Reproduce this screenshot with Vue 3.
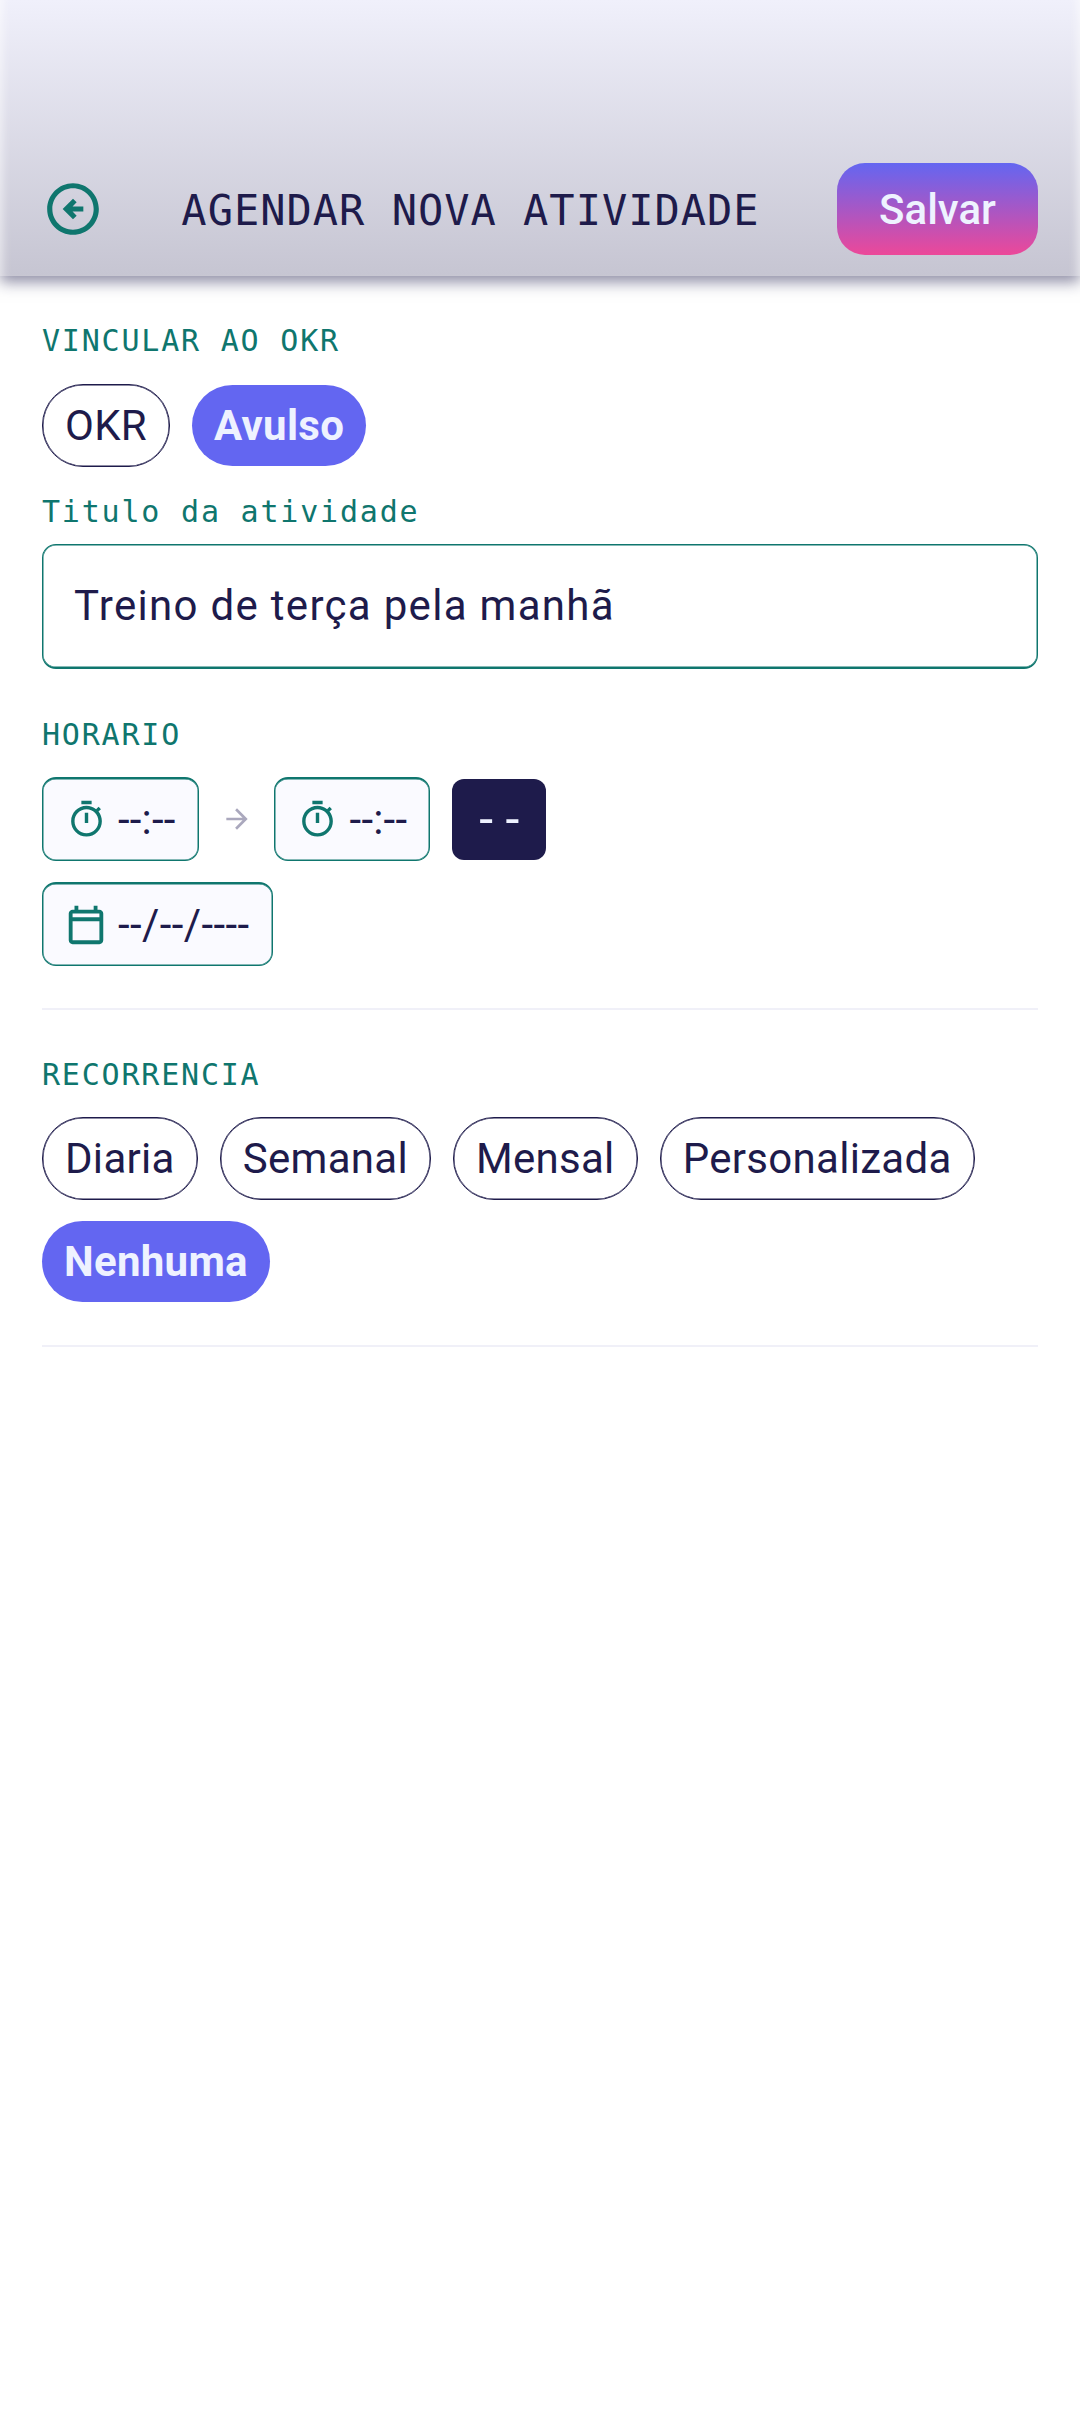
<template>
  <div class="screen">
    <header class="topbar">
      <button class="back" aria-label="Voltar">
        <svg viewBox="0 0 24 24" class="back-icon">
          <path d="M2 12c0 5.52 4.48 10 10 10s10-4.48 10-10S17.52 2 12 2 2 6.48 2 12zm18 0c0 4.42-3.58 8-8 8s-8-3.58-8-8 3.58-8 8-8 8 3.58 8 8zM8 12l4-4 1.41 1.41L11.83 11H16v2h-4.17l1.59 1.59L12 16l-4-4z" />
        </svg>
      </button>
      <h1 class="title">AGENDAR NOVA ATIVIDADE</h1>
      <button class="save">Salvar</button>
    </header>

    <main class="content">
      <div class="label first">VINCULAR AO OKR</div>
      <div class="chips">
        <span
          v-for="opt in linkOptions"
          :key="opt"
          class="chip"
          :class="{ selected: opt === link }"
        >{{ opt }}</span>
      </div>

      <div class="label title-label">Titulo da atividade</div>
      <input class="text-input" type="text" :value="activityTitle" />

      <div class="label section-label">HORARIO</div>
      <div class="time-row">
        <div class="field">
          <span class="field-icon">
            <svg viewBox="0 0 24 24" class="timer"><path :d="timerPath" /></svg>
          </span>
          <span>--:--</span>
        </div>
        <svg viewBox="0 0 24 24" class="arrow">
          <path d="M12 4l-1.41 1.41L16.17 11H4v2h12.17l-5.58 5.59L12 20l8-8z" />
        </svg>
        <div class="field">
          <span class="field-icon">
            <svg viewBox="0 0 24 24" class="timer"><path :d="timerPath" /></svg>
          </span>
          <span>--:--</span>
        </div>
        <div class="duration">- -</div>
      </div>
      <div class="date-row">
        <div class="field">
          <span class="field-icon">
            <svg viewBox="0 0 24 24" class="calendar">
              <path d="M19 4h-1V2h-2v2H8V2H6v2H5c-1.1 0-2 .9-2 2v14c0 1.1.9 2 2 2h14c1.1 0 2-.9 2-2V6c0-1.1-.9-2-2-2zm0 16H5V10h14v10zm0-12H5V6h14v2z" />
            </svg>
          </span>
          <span>--/--/----</span>
        </div>
      </div>

      <div class="divider"></div>

      <div class="label section-label recur-label">RECORRENCIA</div>
      <div class="chips wrap">
        <span
          v-for="opt in recurrenceOptions"
          :key="opt"
          class="chip"
          :class="{ selected: opt === recurrence }"
        >{{ opt }}</span>
      </div>

      <div class="divider last"></div>
    </main>
  </div>
</template>

<script setup>
import { ref } from 'vue';

const linkOptions = ['OKR', 'Avulso'];
const recurrenceOptions = ['Diaria', 'Semanal', 'Mensal', 'Personalizada', 'Nenhuma'];

const link = ref('Avulso');
const recurrence = ref('Nenhuma');
const activityTitle = ref('Treino de terça pela manhã');

const timerPath =
  'M15 1H9v2h6V1zm-4 13h2V8h-2v6zm8.03-6.61l1.42-1.42c-.43-.51-.9-.99-1.41-1.41l-1.42 1.42C16.07 4.74 14.12 4 12 4c-4.97 0-9 4.03-9 9s4.02 9 9 9 9-4.03 9-9c0-2.12-.74-4.07-1.97-5.61zM12 20c-3.87 0-7-3.13-7-7s3.13-7 7-7 7 3.13 7 7-3.13 7-7 7z';
</script>

<style>
html,
body {
  background: #fff;
}
</style>

<style scoped>
.screen {
  min-height: 2424px;
  background: #fff;
  font-family: Roboto, sans-serif;
  color: #1e1b4b;
}

.topbar {
  position: relative;
  box-sizing: border-box;
  height: 276px;
  padding: 0 42px 21px;
  display: flex;
  align-items: flex-end;
  justify-content: space-between;
  background: linear-gradient(180deg, #f0f0fb 0%, #c6c5d2 100%);
  box-shadow:
    0 6px 14px rgba(30, 27, 75, 0.5),
    inset 10px 0 9px -7px rgba(255, 255, 255, 0.55),
    inset -10px 0 9px -7px rgba(255, 255, 255, 0.55);
}

.back {
  width: 62px;
  height: 62px;
  margin-bottom: 15px;
  padding: 0;
  border: 0;
  background: none;
}

.back-icon {
  display: block;
  width: 62px;
  height: 62px;
  fill: #0f766e;
}

.title {
  margin: 0 0 19px;
  font-family: "DejaVu Sans Mono", monospace;
  font-size: 42px;
  letter-spacing: 1px;
  line-height: 50px;
  font-weight: 400;
  color: #1e1b4b;
}

.save {
  width: 201px;
  height: 92px;
  padding: 0;
  border: 0;
  border-radius: 28px;
  background: linear-gradient(180deg, #6366f1 0%, #ec4899 100%);
  font-family: Roboto, sans-serif;
  font-size: 42px;
  font-weight: 500;
  color: #eef2ff;
}

.content {
  padding: 46px 42px 0;
}

.label {
  font-family: "DejaVu Sans Mono", monospace;
  font-size: 30px;
  letter-spacing: 1.8px;
  line-height: 38px;
  color: #0f766e;
}

.title-label {
  margin-top: 26px;
}

.section-label {
  margin-top: 47px;
}

.recur-label {
  margin-top: 46px;
}

.chips {
  margin-top: 24px;
  display: flex;
  flex-wrap: wrap;
  align-items: center;
  gap: 21px 22px;
}

.wrap {
  margin-top: 23px;
}

.chip {
  box-sizing: border-box;
  height: 83px;
  padding: 0 22px;
  display: flex;
  align-items: center;
  border: 1px solid #1e1b4b;
  border-radius: 41px;
  box-shadow: inset 0 0 0 0.5px #1e1b4b;
  font-size: 42px;
  letter-spacing: 0.3px;
  color: #1e1b4b;
}

.chip.selected {
  height: 81px;
  border: 0;
  box-shadow: none;
  background: #6366f1;
  font-weight: 700;
  color: #eef2ff;
}

.text-input {
  display: block;
  box-sizing: border-box;
  width: 100%;
  height: 125px;
  margin-top: 13px;
  padding: 0 31px 2px;
  border: 1px solid #0f766e;
  border-bottom-width: 2px;
  border-radius: 14px;
  box-shadow: inset 0 0 0 0.5px #0f766e;
  outline: none;
  background: #fff;
  font-family: Roboto, sans-serif;
  font-size: 42px;
  letter-spacing: 1.3px;
  color: #1e1b4b;
}

.time-row {
  margin-top: 23px;
  display: flex;
  align-items: center;
}

.date-row {
  margin-top: 21px;
  display: flex;
  letter-spacing: 0.4px;
}

.field {
  box-sizing: border-box;
  height: 84px;
  padding: 0 22px 0 20px;
  display: flex;
  align-items: center;
  gap: 9px;
  border: 1px solid #0f766e;
  border-top-width: 2px;
  border-radius: 14px;
  box-shadow: inset 0 0 0 0.5px #0f766e;
  background: #fafaff;
  font-size: 42px;
  color: #1e1b4b;
}

.time-row .field {
  letter-spacing: 0.2px;
}

.field-icon {
  width: 46px;
  height: 46px;
  flex: none;
  display: flex;
  align-items: center;
  justify-content: center;
}

.timer {
  width: 41px;
  height: 41px;
  fill: #0f766e;
}

.calendar {
  width: 46px;
  height: 46px;
  fill: #0f766e;
}

.arrow {
  width: 32px;
  height: 32px;
  margin: 0 21px 0 22px;
  fill: #aaa8bd;
}

.duration {
  width: 94px;
  height: 81px;
  margin-left: 22px;
  display: flex;
  align-items: center;
  justify-content: center;
  border-radius: 12px;
  background: #1e1b4b;
  font-size: 50px;
  color: #eef2ff;
}

.divider {
  height: 2px;
  margin-top: 42px;
  background: #f0f0f8;
}

.divider.last {
  margin-top: 43px;
}
</style>
